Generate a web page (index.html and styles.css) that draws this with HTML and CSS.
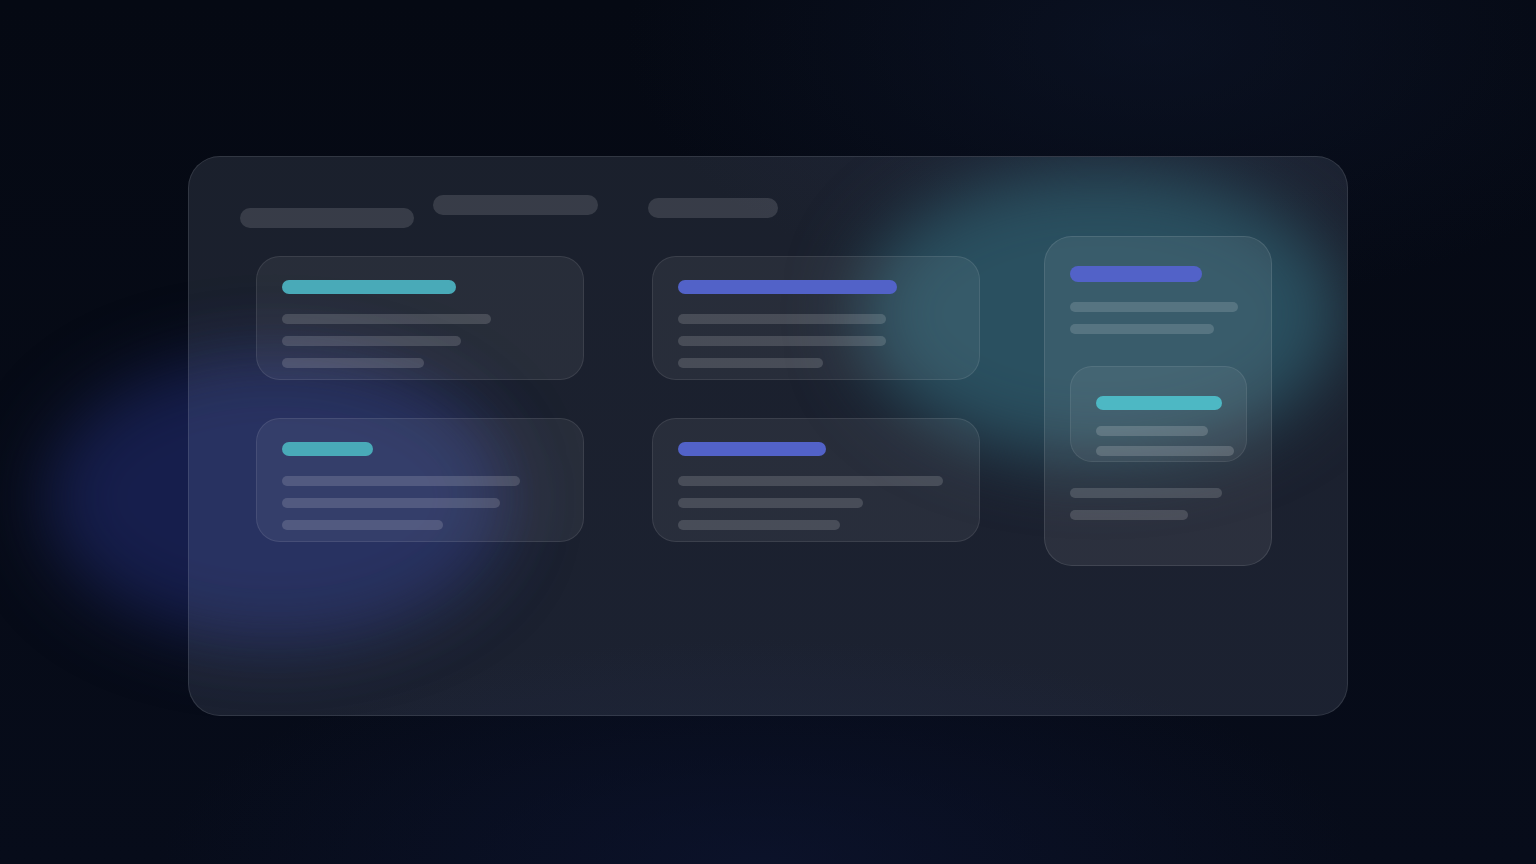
FILE: index.html
```html
<!DOCTYPE html>
<html lang="en">
<head>
<meta charset="utf-8">
<title>Dashboard skeleton</title>
<link rel="stylesheet" href="styles.css">
</head>
<body>
<div class="scene">
  <div class="blob blob-blue"></div>
  <div class="frame">
    <div class="blob blob-teal"></div>
    <div class="blob blob-blue-in"></div>
    <div class="header">
      <div class="hbar hbar-1"></div>
      <div class="hbar hbar-2"></div>
      <div class="hbar hbar-3"></div>
    </div>
    <div class="content">
      <div class="grid">
        <div class="card">
          <div class="accent teal" style="width:174px"></div>
          <div class="lines">
            <div class="line" style="width:209px"></div>
            <div class="line" style="width:179px"></div>
            <div class="line" style="width:142px"></div>
          </div>
        </div>
        <div class="card">
          <div class="accent blue" style="width:219px"></div>
          <div class="lines">
            <div class="line" style="width:208px"></div>
            <div class="line" style="width:208px"></div>
            <div class="line" style="width:145px"></div>
          </div>
        </div>
        <div class="card">
          <div class="accent teal" style="width:91px"></div>
          <div class="lines">
            <div class="line" style="width:238px"></div>
            <div class="line" style="width:218px"></div>
            <div class="line" style="width:161px"></div>
          </div>
        </div>
        <div class="card">
          <div class="accent blue" style="width:148px"></div>
          <div class="lines">
            <div class="line" style="width:265px"></div>
            <div class="line" style="width:185px"></div>
            <div class="line" style="width:162px"></div>
          </div>
        </div>
      </div>
      <div class="side">
        <div class="accent accent-lg blue" style="width:132px"></div>
        <div class="lines">
          <div class="line" style="width:168px"></div>
          <div class="line" style="width:144px"></div>
        </div>
        <div class="inner">
          <div class="accent teal-light" style="width:126px"></div>
          <div class="lines lines-tight">
            <div class="line line-light" style="width:112px"></div>
            <div class="line line-light" style="width:138px"></div>
          </div>
        </div>
        <div class="lines">
          <div class="line" style="width:152px"></div>
          <div class="line" style="width:118px"></div>
        </div>
      </div>
    </div>
  </div>
</div>
</body>
</html>
```

FILE: styles.css
```css
* { box-sizing: border-box; }
html, body {
  margin: 0;
  padding: 0;
  width: 1536px;
  height: 864px;
  overflow: hidden;
}
body {
  background-color: #060a15;
  background-image:
    radial-gradient(ellipse 700px 360px at 1150px 40px, rgba(16, 26, 50, 0.45), transparent 75%),
    radial-gradient(ellipse 800px 300px at 760px 864px, rgba(14, 22, 52, 0.6), transparent 75%),
    linear-gradient(180deg, #050913 0%, #070c1a 100%);
  font-family: "Inter", "Liberation Sans", sans-serif;
}
.scene {
  position: relative;
  width: 1536px;
  height: 864px;
  display: flex;
  justify-content: center;
  align-items: flex-start;
  padding-top: 156px;
}
.blob {
  position: absolute;
  border-radius: 50%;
  filter: blur(34px);
  pointer-events: none;
}
.blob-blue {
  left: 45px;
  top: 355px;
  width: 460px;
  height: 285px;
  background: rgb(22, 30, 76);
}
.blob-blue-in {
  left: -143px;
  top: 199px;
  width: 460px;
  height: 285px;
  background: rgba(40, 50, 110, 0.2);
  z-index: 0;
}
.blob-teal {
  left: 670px;
  top: 12px;
  width: 482px;
  height: 290px;
  background: rgb(42, 80, 96);
  z-index: 0;
}
.frame {
  position: relative;
  overflow: hidden;
  width: 1160px;
  height: 560px;
  border-radius: 32px;
  background: rgba(210, 222, 255, 0.105);
  border: 1px solid rgba(255, 255, 255, 0.1);
  padding: 38px 0 0 51px;
}
.header, .content { position: relative; z-index: 1; }
.header {
  display: flex;
  align-items: flex-start;
  height: 33px;
}
.hbar {
  height: 20px;
  border-radius: 10px;
  background: rgba(255, 255, 255, 0.13);
}
.hbar-1 { width: 174px; margin-top: 13px; }
.hbar-2 { width: 165px; margin-left: 19px; }
.hbar-3 { width: 130px; margin-left: 50px; margin-top: 3px; }
.content {
  display: flex;
  align-items: flex-start;
  margin-top: 8px;
  padding-left: 16px;
}
.grid {
  display: grid;
  grid-template-columns: 328px 328px;
  grid-auto-rows: 124px;
  column-gap: 68px;
  row-gap: 38px;
  margin-top: 20px;
}
.card {
  border-radius: 24px;
  background: rgba(255, 255, 255, 0.06);
  border: 1px solid rgba(255, 255, 255, 0.09);
  padding: 23px 0 0 25px;
}
.accent {
  height: 14px;
  border-radius: 7px;
}
.accent-lg { height: 16px; border-radius: 8px; }
.teal { background: #49aab8; }
.teal-light { background: #4db8c4; }
.blue { background: #5262c8; }
.lines {
  display: flex;
  flex-direction: column;
  gap: 12px;
  margin-top: 20px;
}
.lines-tight { margin-top: 16px; gap: 10px; }
.line {
  height: 10px;
  border-radius: 5px;
  background: rgba(255, 255, 255, 0.15);
}
.line-light { background: rgba(255, 255, 255, 0.17); }
.side {
  width: 228px;
  height: 330px;
  margin-left: 64px;
  border-radius: 28px;
  background: rgba(255, 255, 255, 0.07);
  border: 1px solid rgba(255, 255, 255, 0.1);
  padding: 29px 0 0 25px;
}
.side > .lines:nth-of-type(1) { margin-top: 22px; }
.inner {
  width: 177px;
  height: 96px;
  margin-top: 32px;
  border-radius: 22px;
  background: rgba(255, 255, 255, 0.06);
  border: 1px solid rgba(255, 255, 255, 0.08);
  padding: 29px 0 0 25px;
}
.side > .inner + .lines { margin-top: 26px; }
```
